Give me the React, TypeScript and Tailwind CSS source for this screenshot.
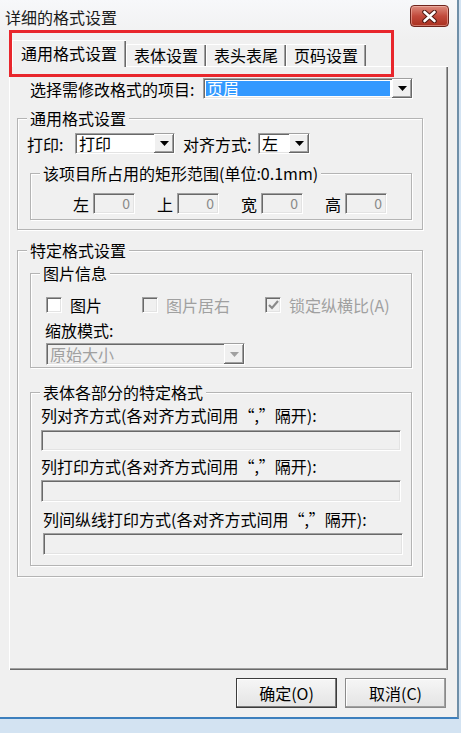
import React from 'react';

const sunken =
  'border border-t-[#a0a0a0] border-l-[#a0a0a0] border-r-white border-b-white shadow-[inset_1px_1px_0_#696969,inset_-1px_-1px_0_#e3e3e3]';
const raised =
  'bg-[#f0f0f0] shadow-[inset_-1px_-1px_0_#696969,inset_1px_1px_0_#fff,inset_-2px_-2px_0_#a0a0a0]';

const Arrow = ({ disabled }: { disabled?: boolean }) => (
  <svg width="9" height="5" viewBox="0 0 9 5">
    <path d="M0 0h9L4.5 5z" fill={disabled ? '#a0a0a0' : '#000'} />
  </svg>
);

const DropBtn = ({ disabled }: { disabled?: boolean }) => (
  <div className={`flex w-[20px] shrink-0 items-center justify-center ${raised}`}>
    <Arrow disabled={disabled} />
  </div>
);

const GroupBox = ({
  title,
  className,
  children,
}: {
  title: string;
  className: string;
  children: React.ReactNode;
}) => (
  <div className={`relative border border-[#b4b4b4] shadow-[inset_1px_1px_0_#fff,1px_1px_0_#fff] ${className}`}>
    <span className="absolute -top-[11px] left-[9px] bg-[#f0f0f0] px-[3px] text-[16px] leading-[20px] text-black">
      {title}
    </span>
    {children}
  </div>
);

const Check = ({ checked, disabled }: { checked?: boolean; disabled?: boolean }) => (
  <div
    className={`flex h-[16px] w-[16px] shrink-0 items-center justify-center ${sunken} ${
      disabled ? 'bg-[#f0f0f0]' : 'bg-white'
    }`}
  >
    {checked && (
      <svg width="11" height="10" viewBox="0 0 11 10">
        <path d="M1 5l3 3 6-7" fill="none" stroke="#8a8a8a" strokeWidth="2.2" />
      </svg>
    )}
  </div>
);

const Field = ({ className }: { className: string }) => (
  <div className={`bg-[#f0f0f0] ${sunken} ${className}`} />
);

const NumBox = ({ label }: { label: string }) => (
  <div className="flex w-[84px] items-center">
    <span className="w-[20px] text-[16px] leading-[20px]">{label}</span>
    <div className={`flex h-[21px] w-[42px] items-center justify-end bg-[#f0f0f0] pr-[4px] text-[14px] text-[#8a8a8a] ${sunken}`}>
      0
    </div>
  </div>
);

const App = () => {
  return (
    <div className="relative h-[733px] w-[461px] overflow-hidden bg-[#d3e3f2] font-['Noto_Sans_CJK_SC','SimSun',sans-serif] text-black">
      <div className="flex h-[719px] w-[459px] flex-col border-b-2 border-r-2 border-b-[#3d7fbd] border-r-[#6f8fa8] bg-[#f0f0f0]">
        {/* Title bar */}
        <div className="relative h-[40px] shrink-0 bg-gradient-to-b from-[#f7f8fa] to-[#f0f0f0]">
          <div className="pl-[5px] pt-[6px] text-[16px] leading-[22px] text-[#1a1a1a]">详细的格式设置</div>
          <div className="absolute right-[8px] top-[5px] flex h-[22px] w-[39px] items-center justify-center rounded-[4px] border border-[#6e241c] bg-gradient-to-b from-[#dc8b7e] via-[#c24a3c] to-[#a9301f] shadow-[inset_0_0_0_1px_rgba(255,210,200,0.45)]">
            <svg width="15" height="13" viewBox="0 0 15 13">
              <path d="M2.5 2l10 9M12.5 2l-10 9" stroke="#4e1912" strokeWidth="4.6" strokeLinecap="round" />
              <path d="M2.5 2l10 9M12.5 2l-10 9" stroke="#fff" strokeWidth="2.6" strokeLinecap="round" />
            </svg>
          </div>
        </div>

        {/* Tabs */}
        <div className="relative z-10 -mb-[1px] flex h-[27px] shrink-0 items-end pl-[12px]">
          <div className="flex h-[27px] w-[114px] items-center justify-center bg-[#f0f0f0] text-[16px] leading-[20px] shadow-[inset_1px_1px_0_#fff,inset_-1px_0_0_#696969,inset_-2px_0_0_#a0a0a0]">
            <span className="-mt-[2px]">通用格式设置</span>
          </div>
          {['表体设置', '表头表尾', '页码设置'].map((t) => (
            <div
              key={t}
              className="flex h-[23px] w-[80px] items-center justify-center border-b border-b-white text-[16px] leading-[20px] shadow-[inset_1px_1px_0_#fff,inset_-1px_0_0_#696969,inset_-2px_0_0_#a0a0a0]"
            >
              {t}
            </div>
          ))}
        </div>

        {/* Panel */}
        <div className="ml-[9px] flex h-[604px] w-[439px] shrink-0 flex-col pl-[8px] shadow-[inset_1px_1px_0_#fff,inset_-1px_-1px_0_#696969,inset_-2px_-2px_0_#a0a0a0]">
          {/* Item selector */}
          <div className="ml-[13px] mt-[12px] flex h-[21px] items-center">
            <span className="w-[173px] text-[16px] leading-[20px]">选择需修改格式的项目:</span>
            <div className={`flex h-[21px] w-[210px] bg-white ${sunken}`}>
              <div className="m-[2px] flex flex-1 items-center bg-[#3399ff] pl-[1px] text-[16px] leading-[17px] text-white">
                页眉
              </div>
              <DropBtn />
            </div>
          </div>

          {/* General */}
          <GroupBox title="通用格式设置" className="mt-[19px] h-[112px] w-[406px]">
            <div className="ml-[9px] mt-[14px] flex h-[21px] items-center">
              <span className="w-[48px] text-[16px] leading-[20px]">打印:</span>
              <div className={`flex h-[21px] w-[100px] bg-white ${sunken}`}>
                <span className="flex-1 pl-[3px] text-[16px] leading-[19px]">打印</span>
                <DropBtn />
              </div>
              <span className="ml-[8px] w-[75px] text-[16px] leading-[20px]">对齐方式:</span>
              <div className={`flex h-[21px] w-[52px] bg-white ${sunken}`}>
                <span className="flex-1 pl-[3px] text-[16px] leading-[19px]">左</span>
                <DropBtn />
              </div>
            </div>
            <GroupBox title="该项目所占用的矩形范围(单位:0.1mm)" className="ml-[12px] mt-[19px] h-[47px] w-[382px]">
              <div className="mt-[19px] flex pl-[42px]">
                <NumBox label="左" />
                <NumBox label="上" />
                <NumBox label="宽" />
                <NumBox label="高" />
              </div>
            </GroupBox>
          </GroupBox>

          {/* Specific */}
          <GroupBox title="特定格式设置" className="mt-[20px] h-[327px] w-[406px]">
            <GroupBox title="图片信息" className="ml-[12px] mt-[22px] h-[95px] w-[382px]">
              <div className="mt-[21px] flex items-center pl-[15px] text-[16px] leading-[20px]">
                <div className="flex w-[96px] items-center gap-[8px]">
                  <Check />
                  <span>图片</span>
                </div>
                <div className="flex w-[123px] items-center gap-[8px] text-[#a0a0a0]">
                  <Check disabled />
                  <span>图片居右</span>
                </div>
                <div className="flex items-center gap-[8px] text-[#a0a0a0]">
                  <Check disabled checked />
                  <span>锁定纵横比(A)</span>
                </div>
              </div>
              <div className="mt-[5px] pl-[14px] text-[16px] leading-[20px]">缩放模式:</div>
              <div className={`ml-[15px] mt-[3px] flex h-[22px] w-[199px] bg-[#f0f0f0] ${sunken}`}>
                <span className="flex-1 pl-[3px] text-[16px] leading-[20px] text-[#a0a0a0]">原始大小</span>
                <DropBtn disabled />
              </div>
            </GroupBox>

            <GroupBox title="表体各部分的特定格式" className="ml-[12px] mt-[24px] h-[174px] w-[382px]">
              <div className="ml-[10px] mt-[12px] text-[16px] leading-[20px]">列对齐方式(各对齐方式间用“,”隔开):</div>
              <Field className="ml-[10px] mt-[5px] h-[21px] w-[360px]" />
              <div className="ml-[10px] mt-[5px] text-[16px] leading-[20px]">列打印方式(各对齐方式间用“,”隔开):</div>
              <Field className="ml-[10px] mt-[4px] h-[22px] w-[360px]" />
              <div className="ml-[12px] mt-[7px] text-[16px] leading-[20px]">列间纵线打印方式(各对齐方式间用“,”隔开):</div>
              <Field className="ml-[12px] mt-[4px] h-[22px] w-[360px]" />
            </GroupBox>
          </GroupBox>
        </div>

        {/* Buttons */}
        <div className="mt-[8px] flex justify-end gap-[8px] pr-[11px]">
          <button className="flex h-[30px] w-[101px] items-center justify-center border border-[#3c3c3c] bg-gradient-to-b from-[#f6f6f6] to-[#e4e4e4] text-[16px] leading-[20px] shadow-[inset_-1px_-1px_0_#7a7a7a,inset_1px_1px_0_#fff]">
            确定(O)
          </button>
          <button className="flex h-[30px] w-[101px] items-center justify-center border border-[#8a8a8a] bg-gradient-to-b from-[#f6f6f6] to-[#e4e4e4] text-[16px] leading-[20px] shadow-[inset_-1px_-1px_0_#a0a0a0,inset_1px_1px_0_#fff]">
            取消(C)
          </button>
        </div>
      </div>

      {/* Red highlight around the tab strip */}
      <div className="pointer-events-none absolute left-[9px] top-[30px] h-[47px] w-[385px] border-[3px] border-[#e8262c]" />
    </div>
  );
};

export default App;
